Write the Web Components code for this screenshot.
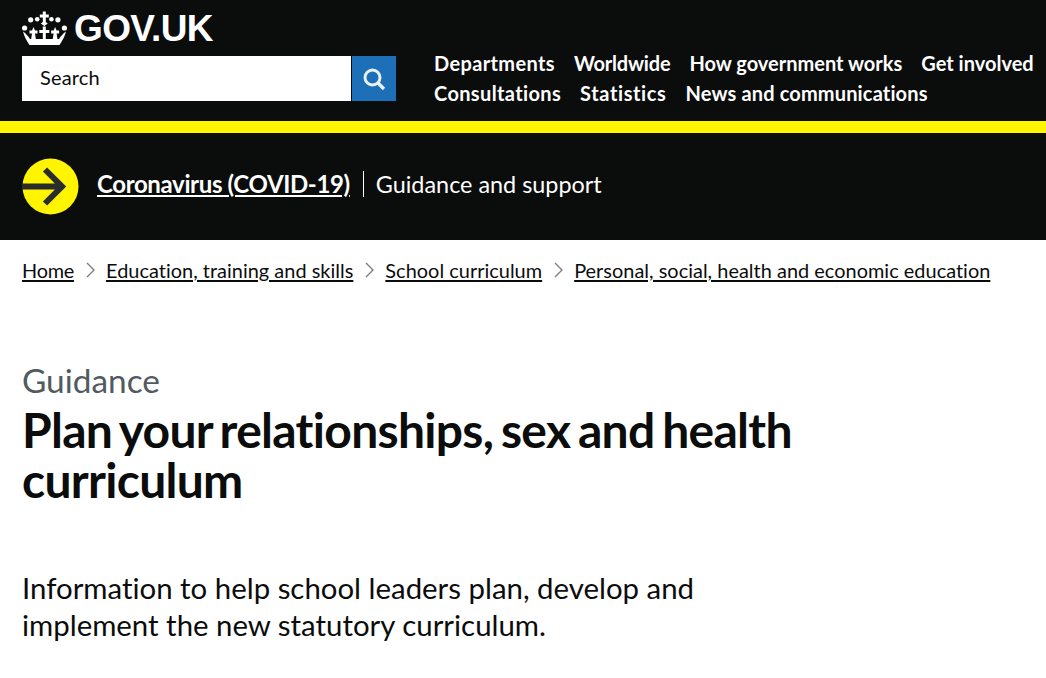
<!DOCTYPE html>
<html lang="en">
<head>
<meta charset="utf-8">
<title>Plan your relationships, sex and health curriculum - GOV.UK</title>
<style>
  html, body { margin: 0; padding: 0; background: #fff; }
  body { font-family: "Lato", "Liberation Sans", sans-serif; font-variant-ligatures: none; color: #0b0c0c; overflow: hidden; }
</style>
</head>
<body>
<gov-header>
  <gov-nav-link style="letter-spacing: 0.36px">Departments</gov-nav-link>
  <gov-nav-link style="letter-spacing: -0.2px">Worldwide</gov-nav-link>
  <gov-nav-link>How government works</gov-nav-link>
  <gov-nav-link>Get involved</gov-nav-link>
  <gov-nav-link style="letter-spacing: 0.36px">Consultations</gov-nav-link>
  <gov-nav-link style="letter-spacing: 0.62px">Statistics</gov-nav-link>
  <gov-nav-link style="letter-spacing: 0.15px">News and communications</gov-nav-link>
</gov-header>
<covid-banner></covid-banner>
<gov-breadcrumbs>
  <a href="#">Home</a>
  <a href="#">Education, training and skills</a>
  <a href="#">School curriculum</a>
  <a href="#">Personal, social, health and economic education</a>
</gov-breadcrumbs>
<page-title context="Guidance">Plan your relationships, sex and health curriculum</page-title>
<page-lead>Information to help school leaders plan, develop and implement the new statutory curriculum.</page-lead>

<script>
class GovNavLink extends HTMLElement {
  constructor() {
    super();
    this.attachShadow({ mode: 'open' });
  }

  connectedCallback() {
    this.shadowRoot.innerHTML = `
      <style>
        :host { display: block; }
        a { display: block; color: #fff; font-size: 20px; line-height: 30px; font-weight: 700; text-decoration: none; white-space: nowrap; }
      </style>
      <a href="#"><slot></slot></a>
    `;
  }
}

class GovHeader extends HTMLElement {
  constructor() {
    super();
    this.attachShadow({ mode: 'open' });
  }

  connectedCallback() {
    this.shadowRoot.innerHTML = `
      <style>
        :host { display: block; background: #0b0c0c; color: #fff; }
        .inner { display: flex; height: 121px; padding-left: 22px; box-sizing: border-box; }
        .brand { width: 374px; flex: none; padding-top: 10px; }
        .logo { display: flex; align-items: center; gap: 7px; height: 36px; color: #fff; text-decoration: none; }
        .logo svg { display: block; }
        .logo span { font: 700 37px/36px "Liberation Sans", Arial, sans-serif; letter-spacing: -0.6px; padding-top: 2px; }
        .search { display: flex; margin-top: 10px; height: 45px; }
        .field { flex: 1; background: #fff; color: #0b0c0c; font-size: 20px; letter-spacing: 0.15px; line-height: 43px; padding-left: 18px; border-right: 1px solid #0b0c0c; }
        .btn { width: 44px; background: #1d70b8; display: flex; align-items: center; justify-content: center; }
        nav { display: flex; flex-wrap: wrap; align-content: flex-start; column-gap: 19px; margin-left: 38px; padding-top: 48px; width: 610px; }
        .bar { height: 12px; background: #fff500; }
      </style>
      <div class="inner">
        <div class="brand">
          <a class="logo" href="#">
            <svg width="45" height="34" viewBox="0 0 45 34" fill="#fff" aria-hidden="true">
              <path d="M20.800 0.500h3v3h3v3h-3v4.500l2 1.500-3.500 2.500-3.500-2.500 2-1.500V6.500h-3v-3h3z"/>
              <circle cx="8.700" cy="8.800" r="2.600"/><circle cx="15.200" cy="8.200" r="2.300"/>
              <circle cx="29.400" cy="8.200" r="2.300"/><circle cx="35.900" cy="8.800" r="2.600"/>
              <circle cx="2.600" cy="17" r="2.600"/><circle cx="42.400" cy="17" r="2.600"/>
              <path d="M20.800 15.500h3v3.500h3.500v3h-3.500v7h-3v-7h-3.500v-3h3.500z"/>
              <path d="M11.500 16l1.500 3.500h2.500v3H13l1 6.500H9l1-6.500H7.500v-3H10z"/>
              <path d="M33.100 16l-1.500 3.500h-2.500v3h2.500l-1 6.500h5l-1-6.500h2.500v-3h-2.500z"/>
              <path d="M1 20.500c3 2 5 4.500 7 7.500h29c2-3 4-5.500 7-7.500-1.200 5-4 9.500-6.500 13.500h-30C5 30 2.200 25.500 1 20.500z"/>
            </svg>
            <span>GOV.UK</span>
          </a>
          <div class="search">
            <div class="field">Search</div>
            <div class="btn">
              <svg width="24" height="24" viewBox="0 0 24 24" fill="none" stroke="#fff" stroke-opacity="0.9" aria-hidden="true">
                <circle cx="10.500" cy="10.500" r="7.500" stroke-width="3"/>
                <path d="M16 16l6 6" stroke-width="3.400"/>
              </svg>
            </div>
          </div>
        </div>
        <nav><slot></slot></nav>
      </div>
      <div class="bar"></div>
    `;
  }
}

class CovidBanner extends HTMLElement {
  constructor() {
    super();
    this.attachShadow({ mode: 'open' });
  }

  connectedCallback() {
    this.shadowRoot.innerHTML = `
      <style>
        :host { display: flex; align-items: center; height: 107px; background: #0b0c0c; color: #fff; padding-left: 22px; }
        svg { display: block; flex: none; margin-right: 18px; }
        .text { display: flex; align-items: center; margin-top: -6px; }
        a { color: #fff; font-size: 24px; font-weight: 700; letter-spacing: -0.36px; line-height: 30px; text-decoration-thickness: 2px; text-underline-offset: 2px; }
        span { border-left: 1px solid #fff; margin-left: 13px; padding-left: 12px; font-size: 23.400px; line-height: 26px; }
      </style>
      <svg width="57" height="57" viewBox="0 0 57 57" aria-hidden="true">
        <circle cx="28.500" cy="28.500" r="28" fill="#fff500"/>
        <path d="M0 28.500h40M23 11.500l17 17-17 17" fill="none" stroke="#2b2c2c" stroke-width="6"/>
      </svg>
      <div class="text">
        <a href="#">Coronavirus (COVID-19)</a>
        <span>Guidance and support</span>
      </div>
    `;
  }
}

class GovBreadcrumbs extends HTMLElement {
  constructor() {
    super();
    this.attachShadow({ mode: 'open' });
  }

  connectedCallback() {
    this.shadowRoot.innerHTML = `
      <style>
        :host { display: block; padding: 18px 22px 0; height: 44px; }
        ::slotted(a) { color: #0b0c0c; font-size: 19.900px; letter-spacing: 0.03px; line-height: 24px; text-decoration-thickness: 2px; text-underline-offset: 2px; }
        ::slotted(a:first-child) { letter-spacing: -0.25px; }
        .row { display: flex; align-items: center; gap: 11px; }
      </style>
      <div class="row"><slot></slot></div>
    `;
    // the separators sit between the links, drawn on the light side
    const links = [...this.querySelectorAll('a')];
    links.slice(0, -1).forEach((link) => {
      const sep = document.createElementNS('http://www.w3.org/2000/svg', 'svg');
      sep.setAttribute('width', '10');
      sep.setAttribute('height', '16');
      sep.setAttribute('viewBox', '0 0 10 16');
      sep.innerHTML = '<path d="M2 1l7 7-7 7" fill="none" stroke="#7f7f7f" stroke-width="1.400"/>';
      link.after(sep);
    });
  }
}

class PageTitle extends HTMLElement {
  constructor() {
    super();
    this.attachShadow({ mode: 'open' });
  }

  connectedCallback() {
    const context = this.getAttribute('context') || '';
    this.shadowRoot.innerHTML = `
      <style>
        :host { display: block; padding: 58px 22px 0; }
        .context { color: #505a5f; font-size: 33.400px; line-height: 40px; margin-bottom: 5px; }
        h1 { margin: 0; max-width: 800px; font-size: 48px; line-height: 50px; font-weight: 700; letter-spacing: -0.7px; word-spacing: -3.300px; color: #0b0c0c; }
      </style>
      <div class="context">${context}</div>
      <h1><slot></slot></h1>
    `;
  }
}

class PageLead extends HTMLElement {
  constructor() {
    super();
    this.attachShadow({ mode: 'open' });
  }

  connectedCallback() {
    this.shadowRoot.innerHTML = `
      <style>
        :host { display: block; padding: 64px 22px 0; }
        p { margin: 0; max-width: 700px; font-size: 29.400px; line-height: 37px; color: #0b0c0c; }
      </style>
      <p><slot></slot></p>
    `;
  }
}

customElements.define('gov-nav-link', GovNavLink);
customElements.define('gov-header', GovHeader);
customElements.define('covid-banner', CovidBanner);
customElements.define('gov-breadcrumbs', GovBreadcrumbs);
customElements.define('page-title', PageTitle);
customElements.define('page-lead', PageLead);
</script>
</body>
</html>
